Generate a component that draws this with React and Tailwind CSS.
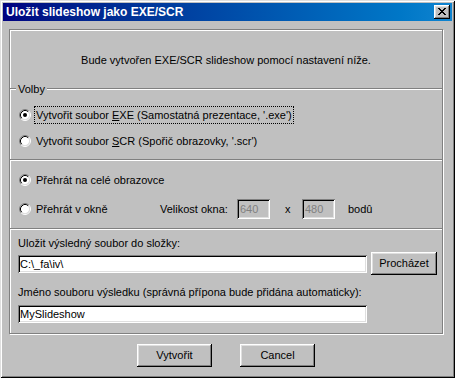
import React from "react";

function Radio({ checked }) {
    return (
        <svg width="12" height="12" viewBox="0 0 12 12" className="shrink-0">
            <circle cx="6" cy="6" r="4.5" fill="#fff" />
            <path d="M2.11 9.89A5.5 5.5 0 0 1 9.89 2.11" fill="none" stroke="#808080" />
            <path d="M2.82 9.18A4.5 4.5 0 0 1 9.18 2.82" fill="none" stroke="#000" />
            <path d="M9.89 2.11A5.5 5.5 0 0 1 2.11 9.89" fill="none" stroke="#fff" />
            <path d="M9.18 2.82A4.5 4.5 0 0 1 2.82 9.18" fill="none" stroke="#dfdfdf" />
            {checked && <circle cx="6" cy="6" r="2" fill="#000" />}
        </svg>
    );
}

function Separator() {
    return <div className="h-[2px] border-t border-t-[#808080] border-b border-b-white" />;
}

export default function App() {
    return (
        <div className="w-[455px] h-[378px] bg-[#c0c0c0] p-[3px] text-[11px] text-black font-['Liberation_Sans',Arial,sans-serif] shadow-[inset_1px_1px_#dfdfdf,inset_-1px_-1px_#000,inset_2px_2px_#fff,inset_-2px_-2px_#808080]">
            {/* Title bar */}
            <div className="h-[18px] flex items-center justify-between pl-[3px] pr-[2px] bg-linear-to-r from-[#000080] to-[#1084d0]">
                <span className="text-white text-[12px] font-bold leading-[14px]">Uložit slideshow jako EXE/SCR</span>
                <button className="w-[16px] h-[14px] bg-[#c0c0c0] pl-[4px] pt-[3px] flex items-start shadow-[inset_-1px_-1px_#000,inset_1px_1px_#fff,inset_-2px_-2px_#808080,inset_2px_2px_#dfdfdf]">
                    <svg width="8" height="7" viewBox="0 0 8 7" shapeRendering="crispEdges">
                        <path
                            d="M0 0h2v1H0zM6 0h2v1H6zM1 1h2v1H1zM5 1h2v1H5zM2 2h4v1H2zM3 3h2v1H3zM2 4h4v1H2zM1 5h2v1H1zM5 5h2v1H5zM0 6h2v1H0zM6 6h2v1H6z"
                            fill="#000"
                        />
                    </svg>
                </button>
            </div>

            {/* Main frame */}
            <div className="mt-[8px] ml-[6px] w-[434px] h-[305px] border border-[#808080] shadow-[inset_1px_1px_#fff,1px_1px_#fff] flex flex-col">
                <div className="h-[52px] pt-[24px] text-center leading-[13px]">
                    Bude vytvořen EXE/SCR slideshow pomocí nastavení níže.
                </div>

                {/* Volby */}
                <div className="h-[14px] flex items-center">
                    <div className="w-[6px] h-[2px] border-t border-t-[#808080] border-b border-b-white" />
                    <span className="px-[2px] leading-[13px]">Volby</span>
                    <div className="flex-1 h-[2px] border-t border-t-[#808080] border-b border-b-white" />
                </div>
                <div className="h-[63px] pt-[10px] pl-[9px] flex flex-col gap-[8px]">
                    <div className="h-[18px] flex items-center">
                        <Radio checked />
                        <span className="ml-[3px] px-[1px] border border-dotted border-black leading-[16px]">
                            Vytvořit soubor <span className="underline">E</span>XE (Samostatná prezentace, '.exe')
                        </span>
                    </div>
                    <div className="h-[18px] flex items-center">
                        <Radio />
                        <span className="ml-[3px] px-[1px] border border-transparent leading-[16px]">
                            Vytvořit soubor <span className="underline">S</span>CR (Spořič obrazovky, '.scr')
                        </span>
                    </div>
                </div>
                <Separator />

                {/* Playback */}
                <div className="h-[67px] pt-[10px] pl-[9px] flex flex-col gap-[10px]">
                    <div className="h-[18px] flex items-center">
                        <Radio checked />
                        <span className="ml-[3px] px-[1px] border border-transparent leading-[16px]">Přehrát na celé obrazovce</span>
                    </div>
                    <div className="h-[20px] flex items-center">
                        <div className="w-[141px] flex items-center">
                            <Radio />
                            <span className="ml-[3px] px-[1px] border border-transparent leading-[16px]">Přehrát v okně</span>
                        </div>
                        <span className="w-[77px]">Velikost okna:</span>
                        <div className="w-[33px] h-[20px] pl-[3px] flex items-center text-[#808080] shadow-[inset_1px_1px_#808080,inset_-1px_-1px_#fff,inset_2px_2px_#000,inset_-2px_-2px_#dfdfdf]">
                            640
                        </div>
                        <span className="ml-[15px] w-[17px]">x</span>
                        <div className="w-[33px] h-[20px] pl-[3px] flex items-center text-[#808080] shadow-[inset_1px_1px_#808080,inset_-1px_-1px_#fff,inset_2px_2px_#000,inset_-2px_-2px_#dfdfdf]">
                            480
                        </div>
                        <span className="ml-[13px]">bodû</span>
                    </div>
                </div>
                <Separator />

                {/* Output */}
                <div className="h-[103px] pt-[7px] pl-[8px] flex flex-col">
                    <div className="leading-[13px]">Uložit výsledný soubor do složky:</div>
                    <div className="mt-[2px] h-[23px] flex items-center">
                        <input
                            readOnly
                            defaultValue="C:\_fa\iv\"
                            className="w-[349px] h-[18px] pl-[2px] bg-white outline-none shadow-[inset_1px_1px_#808080,inset_-1px_-1px_#fff,inset_2px_2px_#000,inset_-2px_-2px_#dfdfdf]"
                        />
                        <button className="ml-[4px] w-[66px] h-[23px] bg-[#c0c0c0] shadow-[inset_-1px_-1px_#000,inset_1px_1px_#fff,inset_-2px_-2px_#808080,inset_2px_2px_#dfdfdf]">
                            Procházet
                        </button>
                    </div>
                    <div className="mt-[11px] leading-[13px]">
                        Jméno souboru výsledku (správná přípona bude přidána automaticky):
                    </div>
                    <input
                        readOnly
                        defaultValue="MySlideshow"
                        className="mt-[6px] w-[349px] h-[18px] pl-[2px] bg-white outline-none shadow-[inset_1px_1px_#808080,inset_-1px_-1px_#fff,inset_2px_2px_#000,inset_-2px_-2px_#dfdfdf]"
                    />
                </div>
            </div>

            {/* Buttons */}
            <div className="mt-[10px] ml-[6px] w-[434px] flex justify-center gap-[28px]">
                <button className="w-[75px] h-[23px] bg-[#c0c0c0] shadow-[inset_-1px_-1px_#000,inset_1px_1px_#fff,inset_-2px_-2px_#808080,inset_2px_2px_#dfdfdf]">
                    Vytvořit
                </button>
                <button className="w-[75px] h-[23px] bg-[#c0c0c0] shadow-[inset_-1px_-1px_#000,inset_1px_1px_#fff,inset_-2px_-2px_#808080,inset_2px_2px_#dfdfdf]">
                    Cancel
                </button>
            </div>
        </div>
    );
}
